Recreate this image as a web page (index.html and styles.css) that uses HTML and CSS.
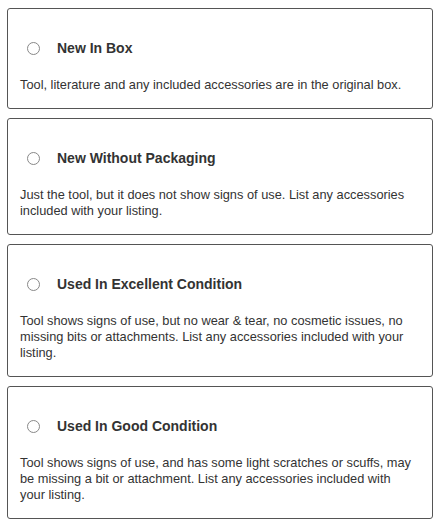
FILE: index.html
```html
<!DOCTYPE html>
<html>
<head>
<meta charset="utf-8">
<link rel="stylesheet" href="styles.css">
</head>
<body>
<div class="list">
  <label class="card">
    <div class="head"><span class="radio"></span><span class="title">New In Box</span></div>
    <p class="desc">Tool, literature and any included accessories are in the original box.</p>
  </label>
  <label class="card">
    <div class="head"><span class="radio"></span><span class="title">New Without Packaging</span></div>
    <p class="desc">Just the tool, but it does not show signs of use. List any accessories included with your listing.</p>
  </label>
  <label class="card">
    <div class="head"><span class="radio"></span><span class="title">Used In Excellent Condition</span></div>
    <p class="desc">Tool shows signs of use, but no wear &amp; tear, no cosmetic issues, no missing bits or attachments. List any accessories included with your listing.</p>
  </label>
  <label class="card">
    <div class="head"><span class="radio"></span><span class="title">Used In Good Condition</span></div>
    <p class="desc">Tool shows signs of use, and has some light scratches or scuffs, may be missing a bit or attachment. List any accessories included with your listing.</p>
  </label>
</div>
</body>
</html>
```

FILE: styles.css
```css
html, body {
  margin: 0;
  padding: 0;
  background: #fff;
}
body {
  font-family: "Liberation Sans", Arial, sans-serif;
  color: #333;
}
.list {
  display: flex;
  flex-direction: column;
  gap: 9px;
  padding: 8px 6px 0 7px;
}
.card {
  display: block;
  border: 1px solid #555;
  border-radius: 3px;
  padding: 30px 17px 15px 12px;
}
.head {
  display: flex;
  align-items: center;
  height: 18px;
}
.radio {
  width: 11px;
  height: 11px;
  border: 1px solid #888;
  border-radius: 50%;
  margin-left: 7px;
  margin-right: 17px;
  flex: none;
}
.title {
  font-weight: bold;
  font-size: 14px;
  line-height: 18px;
}
.desc {
  margin: 20px 0 0 0;
  font-size: 12.8px;
  line-height: 16px;
}
```
